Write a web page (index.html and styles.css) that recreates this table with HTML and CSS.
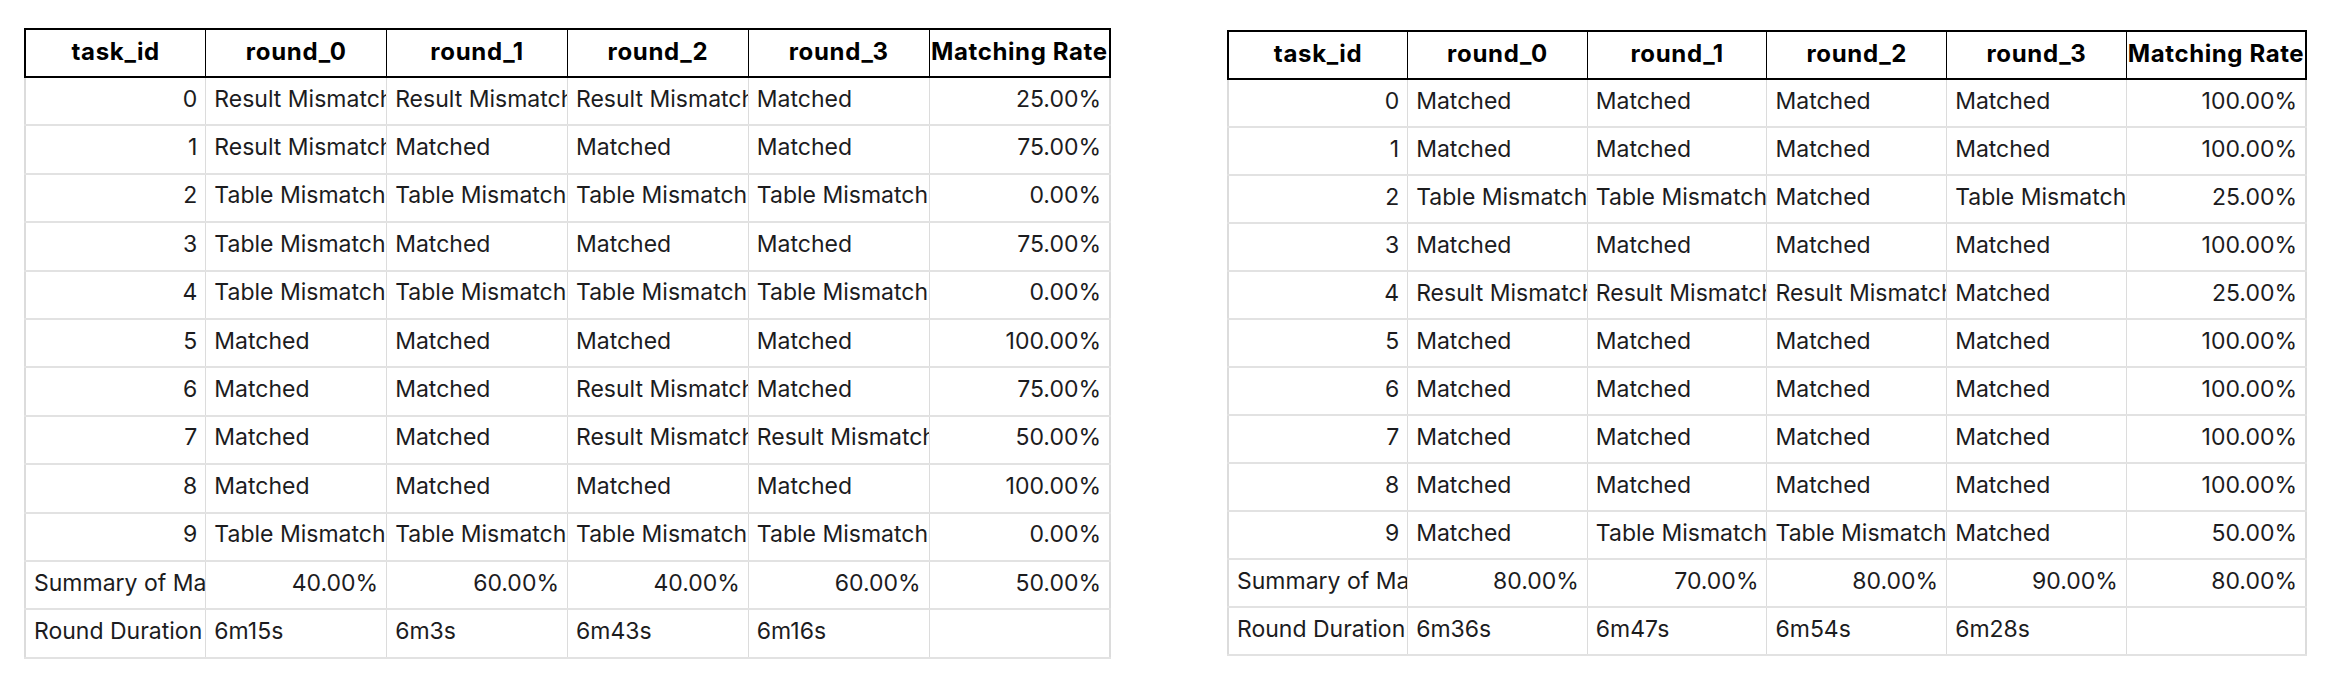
FILE: index.html
```html
<!DOCTYPE html>
<html lang="en">
<head>
<meta charset="utf-8">
<title>Matching results</title>
<link rel="stylesheet" href="styles.css">
</head>
<body>
<div class="page">
  <table class="grid grid-a">
    <thead>
      <tr><th>task_id</th><th>round_0</th><th>round_1</th><th>round_2</th><th>round_3</th><th>Matching Rate</th></tr>
    </thead>
    <tbody>
      <tr><td class="num">0</td><td>Result Mismatch</td><td>Result Mismatch</td><td>Result Mismatch</td><td>Matched</td><td class="num">25.00%</td></tr>
      <tr><td class="num">1</td><td>Result Mismatch</td><td>Matched</td><td>Matched</td><td>Matched</td><td class="num">75.00%</td></tr>
      <tr><td class="num">2</td><td>Table Mismatch</td><td>Table Mismatch</td><td>Table Mismatch</td><td>Table Mismatch</td><td class="num">0.00%</td></tr>
      <tr><td class="num">3</td><td>Table Mismatch</td><td>Matched</td><td>Matched</td><td>Matched</td><td class="num">75.00%</td></tr>
      <tr><td class="num">4</td><td>Table Mismatch</td><td>Table Mismatch</td><td>Table Mismatch</td><td>Table Mismatch</td><td class="num">0.00%</td></tr>
      <tr><td class="num">5</td><td>Matched</td><td>Matched</td><td>Matched</td><td>Matched</td><td class="num">100.00%</td></tr>
      <tr><td class="num">6</td><td>Matched</td><td>Matched</td><td>Result Mismatch</td><td>Matched</td><td class="num">75.00%</td></tr>
      <tr><td class="num">7</td><td>Matched</td><td>Matched</td><td>Result Mismatch</td><td>Result Mismatch</td><td class="num">50.00%</td></tr>
      <tr><td class="num">8</td><td>Matched</td><td>Matched</td><td>Matched</td><td>Matched</td><td class="num">100.00%</td></tr>
      <tr><td class="num">9</td><td>Table Mismatch</td><td>Table Mismatch</td><td>Table Mismatch</td><td>Table Mismatch</td><td class="num">0.00%</td></tr>
      <tr><td>Summary of Matching Rate</td><td class="num">40.00%</td><td class="num">60.00%</td><td class="num">40.00%</td><td class="num">60.00%</td><td class="num">50.00%</td></tr>
      <tr><td>Round Duration</td><td>6m15s</td><td>6m3s</td><td>6m43s</td><td>6m16s</td><td></td></tr>
    </tbody>
  </table>

  <table class="grid grid-b">
    <thead>
      <tr><th>task_id</th><th>round_0</th><th>round_1</th><th>round_2</th><th>round_3</th><th>Matching Rate</th></tr>
    </thead>
    <tbody>
      <tr><td class="num">0</td><td>Matched</td><td>Matched</td><td>Matched</td><td>Matched</td><td class="num">100.00%</td></tr>
      <tr><td class="num">1</td><td>Matched</td><td>Matched</td><td>Matched</td><td>Matched</td><td class="num">100.00%</td></tr>
      <tr><td class="num">2</td><td>Table Mismatch</td><td>Table Mismatch</td><td>Matched</td><td>Table Mismatch</td><td class="num">25.00%</td></tr>
      <tr><td class="num">3</td><td>Matched</td><td>Matched</td><td>Matched</td><td>Matched</td><td class="num">100.00%</td></tr>
      <tr><td class="num">4</td><td>Result Mismatch</td><td>Result Mismatch</td><td>Result Mismatch</td><td>Matched</td><td class="num">25.00%</td></tr>
      <tr><td class="num">5</td><td>Matched</td><td>Matched</td><td>Matched</td><td>Matched</td><td class="num">100.00%</td></tr>
      <tr><td class="num">6</td><td>Matched</td><td>Matched</td><td>Matched</td><td>Matched</td><td class="num">100.00%</td></tr>
      <tr><td class="num">7</td><td>Matched</td><td>Matched</td><td>Matched</td><td>Matched</td><td class="num">100.00%</td></tr>
      <tr><td class="num">8</td><td>Matched</td><td>Matched</td><td>Matched</td><td>Matched</td><td class="num">100.00%</td></tr>
      <tr><td class="num">9</td><td>Matched</td><td>Table Mismatch</td><td>Table Mismatch</td><td>Matched</td><td class="num">50.00%</td></tr>
      <tr><td>Summary of Matching Rate</td><td class="num">80.00%</td><td class="num">70.00%</td><td class="num">80.00%</td><td class="num">90.00%</td><td class="num">80.00%</td></tr>
      <tr><td>Round Duration</td><td>6m36s</td><td>6m47s</td><td>6m54s</td><td>6m28s</td><td></td></tr>
    </tbody>
  </table>
</div>
</body>
</html>
```

FILE: styles.css
```css
html, body {
  margin: 0;
  padding: 0;
  background: #ffffff;
}

.page {
  display: flex;
  align-items: flex-start;
  padding-left: 24px;
  font-family: Inter, "Liberation Sans", Arial, sans-serif;
  color: #1c1c1e;
}

.grid {
  border-collapse: collapse;
  table-layout: fixed;
  font-size: 23px;
  line-height: 28px;
}

.grid-a {
  width: 1087px;
  margin-top: 28px;
}

.grid-b {
  width: 1080px;
  margin-top: 30px;
  margin-left: 116px;
}

.grid th,
.grid td {
  white-space: nowrap;
  overflow: hidden;
  text-overflow: clip;
  vertical-align: middle;
}

.grid th {
  height: 44px;
  padding: 0 6px 2px;
  font-size: 24px;
  letter-spacing: 0.7px;
  font-weight: 700;
  text-align: center;
  color: #000;
  border: 1px solid #000;
  border-top-width: 2px;
  border-bottom-width: 2px;
}

.grid th:first-child { border-left-width: 2px; }
.grid th:last-child { border-right-width: 2px; padding: 0 1px 2px; letter-spacing: 0.6px; }

.grid td {
  padding: 0 8px 5px;
  text-align: left;
  border-left: 1px solid #dcdcdc;
  border-right: 1px solid #dcdcdc;
  border-top: 2px solid #e2e2e2;
  border-bottom: 2px solid #e2e2e2;
}

.grid-a td { height: 41.4px; }
.grid-b td { height: 41px; }

.grid td:first-child { border-left-width: 2px; }
.grid td:last-child { border-right-width: 2px; }

.grid td.num { text-align: right; }
```
